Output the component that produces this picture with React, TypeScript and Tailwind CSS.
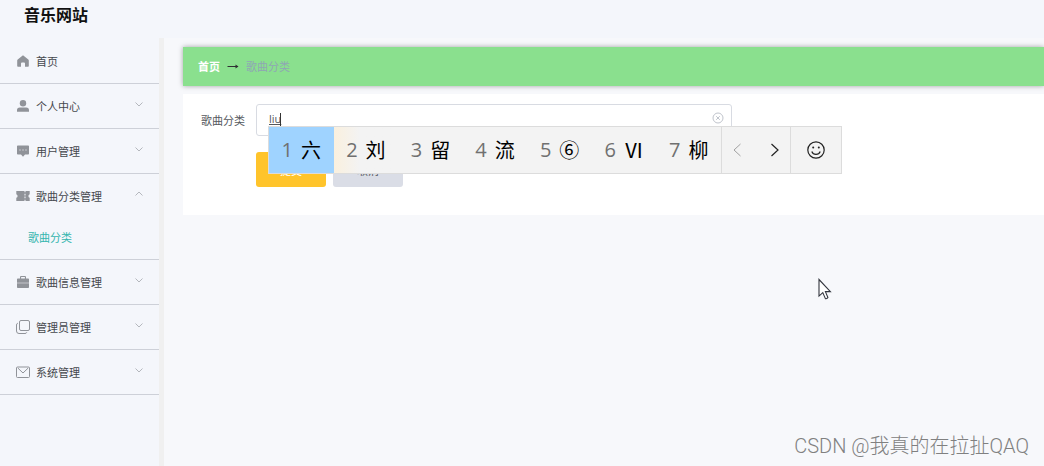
import { useState } from "react";
import clsx from "clsx";

type IconName = "home" | "user" | "chat" | "ticket" | "case" | "copy" | "mail";

interface MenuItem {
  name: string;
  icon: IconName;
  children?: string[];
}

const menu: MenuItem[] = [
  { name: "首页", icon: "home" },
  { name: "个人中心", icon: "user", children: ["个人信息"] },
  { name: "用户管理", icon: "chat", children: ["用户"] },
  { name: "歌曲分类管理", icon: "ticket", children: ["歌曲分类"] },
  { name: "歌曲信息管理", icon: "case", children: ["歌曲信息"] },
  { name: "管理员管理", icon: "copy", children: ["管理员"] },
  { name: "系统管理", icon: "mail", children: ["系统"] },
];

const candidates = ["六", "刘", "留", "流", "⑥", "Ⅵ", "柳"];

function MenuIcon({ name }: { name: IconName }) {
  return (
    <svg
      viewBox="0 0 14 14"
      className="size-[14px] shrink-0 text-[#909399]"
      fill="currentColor"
      aria-hidden="true"
    >
      {name === "home" && (
        <path d="M7 1.2 12.3 5.4q.5.4.5 1V12q0 .8-.8.8H9V9.500q0-1-1-1H6q-1 0-1 1v3.300H2q-.8 0-.8-.8V6.400q0-.6.5-1z" />
      )}
      {name === "user" && (
        <>
          <circle cx="7" cy="4.300" r="3.200" />
          <path d="M1 12.800v-1.600Q1 8.600 3.800 8.600h6.400q2.800 0 2.800 2.600v1.600z" />
        </>
      )}
      {name === "chat" && (
        <path
          fillRule="evenodd"
          d="M1.800 1.500h10.400q.8 0 .8.8v7.400q0 .8-.8.8H9L7 12.800l-2-2.300H1.800q-.8 0-.8-.8V2.300q0-.8.8-.8zM3.500 5.500v1h1v-1zm3 0v1h1v-1zm3 0v1h1v-1z"
        />
      )}
      {name === "ticket" && (
        <path
          fillRule="evenodd"
          d="M.3 2h8.200v1.200h1V2h4.200v3.200a1.900 1.900 0 0 0 0 3.600V12H9.500v-1.200h-1V12H.3V8.800a1.900 1.900 0 0 0 0-3.600zM8.500 4.800v1.600h1V4.800zm0 2.800v1.600h1V7.600z"
        />
      )}
      {name === "case" && (
        <path
          fillRule="evenodd"
          d="M4 3.500V2q0-1 1-1h4q1 0 1 1v1.500h2.200q.8 0 .8.8v3.400H1V4.300q0-.8.8-.8zM5.100 2.100v1.400h3.800V2.100zM1 8.300h12v3.900q0 .8-.8.8H1.800q-.8 0-.8-.8z"
        />
      )}
      {name === "copy" && (
        <g fill="none" stroke="currentColor">
          <rect x="3.500" y=".5" width="10" height="10" rx="1.500" />
          <path d="M1.800 3.200Q.5 3.500.5 5v6q0 2.500 2.500 2.500h6q1.400 0 1.800-1.200" />
        </g>
      )}
      {name === "mail" && (
        <g fill="none" stroke="currentColor">
          <rect x=".5" y="2" width="13" height="10.500" rx="1" />
          <path d="M1.800 3 7 8l5.200-5" />
        </g>
      )}
    </svg>
  );
}

function Chevron({ up }: { up: boolean }) {
  return (
    <svg
      viewBox="0 0 8 8"
      className="ml-auto mb-1 size-2 text-[#b4b7bd]"
      fill="none"
      stroke="currentColor"
      aria-hidden="true"
    >
      <path d={up ? "M.5 5.500 4 2l3.500 3.500" : "M.5 2.500 4 6l3.500-3.500"} />
    </svg>
  );
}

function Sidebar() {
  const [opened, setOpened] = useState("歌曲分类管理");

  return (
    <nav className="w-[164px] shrink-0 border-r-[5px] border-[#f0f0f0] bg-[#f4f6fb] pt-px">
      <ul>
        {menu.map((item) => (
          <li key={item.name} className="border-b border-[#cdd0d8]">
            <button
              type="button"
              className="flex h-11 w-full items-center gap-[6px] px-4 text-left text-[#45484d]"
              onClick={() => setOpened(opened === item.name ? "" : item.name)}
            >
              <MenuIcon name={item.icon} />
              <span>{item.name}</span>
              {item.children && <Chevron up={opened === item.name} />}
            </button>
            {item.children && opened === item.name && (
              <ul className="pb-[3px]">
                {item.children.map((child) => (
                  <li key={child}>
                    <a
                      href="#category"
                      className="flex h-[38px] items-center pl-7 text-[#35b5ae]"
                    >
                      {child}
                    </a>
                  </li>
                ))}
              </ul>
            )}
          </li>
        ))}
      </ul>
    </nav>
  );
}

// candidate window of the input method, floats over the form
function CandidateBar() {
  return (
    <div className="absolute top-[22px] left-3 z-10 flex h-12 border border-[#dcdcdc] bg-[#f3f3f3] text-xl text-black">
      <div className="flex w-[452px]">
        {candidates.map((word, i) => (
          <button
            type="button"
            key={word}
            className={clsx(
              "flex flex-1 items-center justify-center gap-2 whitespace-nowrap",
              i === 0 && "bg-[#9fd3ff]",
              i === 1 && "bg-linear-to-r from-[#faf0de] to-[#f3f3f3] to-40%"
            )}
          >
            <span className="font-['Open_Sans',sans-serif] text-[#707070]">
              {i + 1}
            </span>
            <span>{word}</span>
          </button>
        ))}
      </div>
      <div className="flex border-x border-[#dcdcdc]">
        <button type="button" aria-label="上一页" className="w-[30px] text-[#a0a0a0]">
          <svg viewBox="0 0 8 14" className="mx-auto h-[14px] w-2" fill="none" stroke="currentColor">
            <path d="M7.500 1 1 7l6.500 6" />
          </svg>
        </button>
        <button type="button" aria-label="下一页" className="ml-2 w-[30px] text-[#222]">
          <svg viewBox="0 0 8 14" className="mx-auto h-[14px] w-2" fill="none" stroke="currentColor" strokeWidth="1.2">
            <path d="M.5 1 7 7 .5 13" />
          </svg>
        </button>
      </div>
      <button type="button" aria-label="表情" className="w-[50px] text-[#222]">
        <svg viewBox="0 0 18 18" className="mx-auto size-[18px]" fill="none" stroke="currentColor" strokeWidth="1.2">
          <circle cx="9" cy="9" r="8.200" />
          <path d="M4.800 10.500a4.500 4.500 0 0 0 8.400 0" />
          <circle cx="6.200" cy="6.500" r="1" fill="currentColor" stroke="none" />
          <circle cx="11.800" cy="6.500" r="1" fill="currentColor" stroke="none" />
        </svg>
      </button>
    </div>
  );
}

function CategoryForm() {
  const [category, setCategory] = useState("liu");

  return (
    <form
      className="mt-2 bg-white pt-[10px] pb-7 pl-[18px]"
      onSubmit={(e) => e.preventDefault()}
    >
      <div className="flex items-center">
        <label htmlFor="category" className="w-[55px] shrink-0 pb-px text-[#55585d]">
          歌曲分类
        </label>
        <div className="relative w-[476px]">
          <input
            id="category"
            value={category}
            onChange={(e) => setCategory(e.target.value)}
            className="block h-8 w-full rounded-[3px] border border-[#d8dbe2] bg-white px-3 pb-1 font-['Open_Sans',sans-serif] text-[#55585d] underline underline-offset-1 outline-none"
          />
          <span className="absolute top-[9px] left-6 h-[13px] w-px bg-[#333]" />
          <button
            type="button"
            aria-label="清空"
            className="absolute top-2 right-2 text-[#c0c4cc]"
            onClick={() => setCategory("")}
          >
            <svg viewBox="0 0 12 12" className="size-3" fill="none" stroke="currentColor">
              <circle cx="6" cy="6" r="5" />
              <path d="m4.200 4.200 3.600 3.600M7.800 4.200 4.200 7.800" />
            </svg>
          </button>
          <CandidateBar />
        </div>
      </div>
      <div className="mt-4 flex gap-[7px] pl-[55px]">
        <button type="submit" className="h-[35px] w-[70px] rounded-[3px] bg-[#ffc42b] text-white">
          提交
        </button>
        <button type="button" className="h-[35px] w-[70px] rounded-[3px] bg-[#dadde6] text-[#55585d]">
          取消
        </button>
      </div>
    </form>
  );
}

export default function App() {
  return (
    <div className="relative flex min-h-screen flex-col overflow-hidden bg-[#f7f8fb] font-['Noto_Sans_CJK_SC',sans-serif] text-[11px] leading-4">
      <header className="flex h-[38px] items-start bg-[#f4f6fb] pt-[3px] pl-6">
        <h1 className="text-base leading-[22px] font-bold text-[#111]">音乐网站</h1>
      </header>
      <div className="flex grow">
        <Sidebar />
        <main className="min-w-0 grow pt-[9px] pl-[19px]">
          <div className="flex h-[39px] items-center gap-[7px] bg-[#8ae08e] pb-[2px] pl-[15px] shadow-[0_0_5px_rgba(0,0,0,0.35)]">
            <a href="#home" className="font-bold text-white">
              首页
            </a>
            <svg viewBox="0 0 12 8" className="h-2 w-3 text-[#303133]" fill="none" stroke="currentColor" aria-hidden="true">
              <path d="M.5 4.500h10.500" />
              <path d="M8.500 2.500v4l3-2z" fill="currentColor" stroke="none" />
            </svg>
            <span className="text-[#8fa6b4]">歌曲分类</span>
          </div>
          <CategoryForm />
        </main>
      </div>

      <svg viewBox="0 0 14 22" className="absolute top-[278px] left-[818px] h-[22px] w-[14px]" aria-hidden="true">
        <path
          d="M1 1.500v16.600l3.800-3.500 2.600 6q1.800.4 2.500-1L7.400 13.600h5z"
          fill="#fff"
          stroke="#33363f"
          strokeWidth="1.1"
        />
      </svg>
      <p className="absolute right-[15px] bottom-[6px] font-['Roboto','Noto_Sans_CJK_SC',sans-serif] text-xl leading-7 font-light text-[#808080]">
        CSDN @我真的在拉扯QAQ
      </p>
    </div>
  );
}
